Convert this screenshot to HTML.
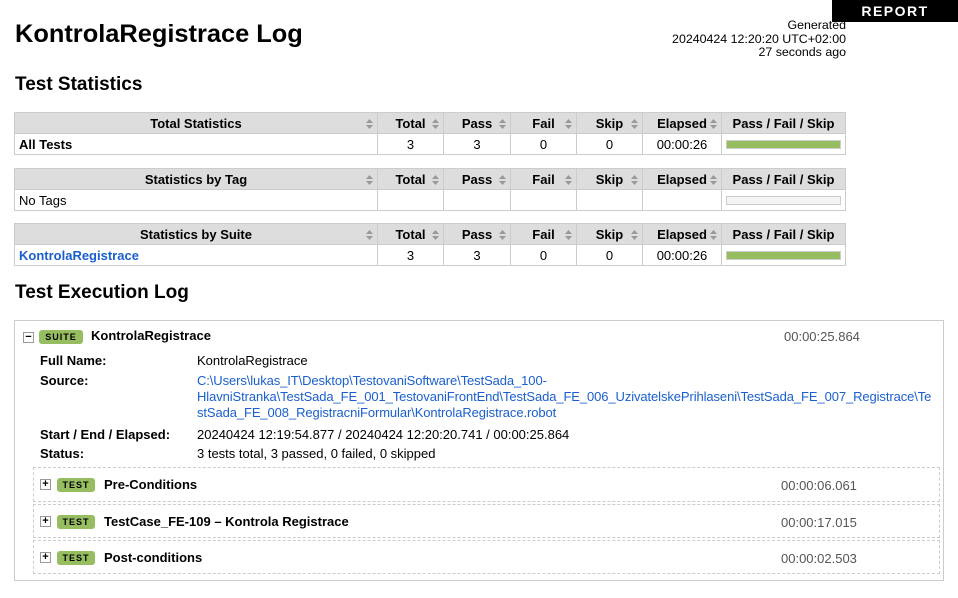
<!DOCTYPE html>
<html><head><meta charset="utf-8"><style>
*{margin:0;padding:0;box-sizing:border-box}
body{width:958px;height:598px;background:#fff;font-family:"Liberation Sans",Arial,sans-serif;color:#000;position:relative;overflow:hidden;font-size:13px}
.a{position:absolute}
#rep{left:832px;top:0;width:126px;height:22px;background:#000;color:#fff;font-weight:bold;font-size:14px;letter-spacing:1.5px;text-align:center;line-height:22px}
#gen{right:112px;top:19px;text-align:right;font-size:12.4px;line-height:13.5px}
h1{position:absolute;left:15px;top:20px;font-size:25.4px;font-weight:bold}
h2{position:absolute;left:15px;font-size:19px;font-weight:bold}
table{position:absolute;left:14px;width:831px;border-collapse:collapse;table-layout:fixed}
td,th{border:1px solid #ccc;height:21px;font-size:13px;padding:0 4px;white-space:nowrap}
th{background:#ddd;font-weight:bold;text-align:center;position:relative}
td{text-align:center}
td.n{text-align:left}
th .s{position:absolute;right:4px;top:6px}
.bar{height:9px;background:#97bd61;border:1px solid #ccc}
.bar.e{background:#f4f4f4}
#suite{left:14px;top:320px;width:930px;height:261px;border:1px solid #ccc}
.badge{position:absolute;background:#97bd61;border-radius:3px;font-size:9px;font-weight:bold;letter-spacing:1px;text-align:center;line-height:14px;height:14px}
.tog{position:absolute;width:11px;height:11px;border:1px solid #999;font-size:11px;line-height:9px;text-align:center;font-weight:bold}
.lbl{position:absolute;left:40px;font-weight:bold}
.val{position:absolute;left:197px;white-space:nowrap}
.tb{position:absolute;left:33px;width:907px;border:1px dashed #ccc}
.el{position:absolute;color:#555}
a{color:#1a5fcf;text-decoration:none}
</style></head><body>
<div id="rep" class="a">REPORT</div>
<div id="gen" class="a">Generated<br>20240424 12:20:20 UTC+02:00<br>27 seconds ago</div>
<h1>KontrolaRegistrace Log</h1>
<h2 style="top:74px">Test Statistics</h2>

<table style="top:112px"><colgroup><col style="width:363px"><col style="width:66px"><col style="width:67px"><col style="width:66px"><col style="width:66px"><col style="width:79px"><col style="width:124px"></colgroup>
<tr><th>Total Statistics<svg class="s" width="7" height="10"><path d="M0 4L3.5 0L7 4Z M0 6L3.5 10L7 6Z" fill="#999"/></svg></th><th>Total<svg class="s" width="7" height="10"><path d="M0 4L3.5 0L7 4Z M0 6L3.5 10L7 6Z" fill="#999"/></svg></th><th>Pass<svg class="s" width="7" height="10"><path d="M0 4L3.5 0L7 4Z M0 6L3.5 10L7 6Z" fill="#999"/></svg></th><th>Fail<svg class="s" width="7" height="10"><path d="M0 4L3.5 0L7 4Z M0 6L3.5 10L7 6Z" fill="#999"/></svg></th><th>Skip<svg class="s" width="7" height="10"><path d="M0 4L3.5 0L7 4Z M0 6L3.5 10L7 6Z" fill="#999"/></svg></th><th>Elapsed<svg class="s" width="7" height="10"><path d="M0 4L3.5 0L7 4Z M0 6L3.5 10L7 6Z" fill="#999"/></svg></th><th>Pass / Fail / Skip</th></tr>
<tr><td class="n"><b>All Tests</b></td><td>3</td><td>3</td><td>0</td><td>0</td><td>00:00:26</td><td><div class="bar"></div></td></tr></table>

<table style="top:168px"><colgroup><col style="width:363px"><col style="width:66px"><col style="width:67px"><col style="width:66px"><col style="width:66px"><col style="width:79px"><col style="width:124px"></colgroup>
<tr><th>Statistics by Tag<svg class="s" width="7" height="10"><path d="M0 4L3.5 0L7 4Z M0 6L3.5 10L7 6Z" fill="#999"/></svg></th><th>Total<svg class="s" width="7" height="10"><path d="M0 4L3.5 0L7 4Z M0 6L3.5 10L7 6Z" fill="#999"/></svg></th><th>Pass<svg class="s" width="7" height="10"><path d="M0 4L3.5 0L7 4Z M0 6L3.5 10L7 6Z" fill="#999"/></svg></th><th>Fail<svg class="s" width="7" height="10"><path d="M0 4L3.5 0L7 4Z M0 6L3.5 10L7 6Z" fill="#999"/></svg></th><th>Skip<svg class="s" width="7" height="10"><path d="M0 4L3.5 0L7 4Z M0 6L3.5 10L7 6Z" fill="#999"/></svg></th><th>Elapsed<svg class="s" width="7" height="10"><path d="M0 4L3.5 0L7 4Z M0 6L3.5 10L7 6Z" fill="#999"/></svg></th><th>Pass / Fail / Skip</th></tr>
<tr><td class="n">No Tags</td><td></td><td></td><td></td><td></td><td></td><td><div class="bar e"></div></td></tr></table>

<table style="top:223px"><colgroup><col style="width:363px"><col style="width:66px"><col style="width:67px"><col style="width:66px"><col style="width:66px"><col style="width:79px"><col style="width:124px"></colgroup>
<tr><th>Statistics by Suite<svg class="s" width="7" height="10"><path d="M0 4L3.5 0L7 4Z M0 6L3.5 10L7 6Z" fill="#999"/></svg></th><th>Total<svg class="s" width="7" height="10"><path d="M0 4L3.5 0L7 4Z M0 6L3.5 10L7 6Z" fill="#999"/></svg></th><th>Pass<svg class="s" width="7" height="10"><path d="M0 4L3.5 0L7 4Z M0 6L3.5 10L7 6Z" fill="#999"/></svg></th><th>Fail<svg class="s" width="7" height="10"><path d="M0 4L3.5 0L7 4Z M0 6L3.5 10L7 6Z" fill="#999"/></svg></th><th>Skip<svg class="s" width="7" height="10"><path d="M0 4L3.5 0L7 4Z M0 6L3.5 10L7 6Z" fill="#999"/></svg></th><th>Elapsed<svg class="s" width="7" height="10"><path d="M0 4L3.5 0L7 4Z M0 6L3.5 10L7 6Z" fill="#999"/></svg></th><th>Pass / Fail / Skip</th></tr>
<tr><td class="n"><a><b>KontrolaRegistrace</b></a></td><td>3</td><td>3</td><td>0</td><td>0</td><td>00:00:26</td><td><div class="bar"></div></td></tr></table>

<h2 style="top:282px">Test Execution Log</h2>
<div id="suite" class="a"></div>
<div class="tog" style="left:23px;top:332px">−</div>
<div class="badge" style="left:39px;top:330px;width:44px">SUITE</div>
<div class="a" style="left:91px;top:328px;font-weight:bold;font-size:13px">KontrolaRegistrace</div>
<div class="el" style="left:784px;top:329px">00:00:25.864</div>

<div class="lbl" style="top:353px">Full Name:</div><div class="val" style="top:353px">KontrolaRegistrace</div>
<div class="lbl" style="top:373px">Source:</div>
<div class="val" style="top:373px;line-height:16px;letter-spacing:-0.1px"><a>C:\Users\lukas_IT\Desktop\TestovaniSoftware\TestSada_100-<br>HlavniStranka\TestSada_FE_001_TestovaniFrontEnd\TestSada_FE_006_UzivatelskePrihlaseni\TestSada_FE_007_Registrace\Te<br>stSada_FE_008_RegistracniFormular\KontrolaRegistrace.robot</a></div>
<div class="lbl" style="top:427px">Start / End / Elapsed:</div><div class="val" style="top:427px">20240424 12:19:54.877 / 20240424 12:20:20.741 / 00:00:25.864</div>
<div class="lbl" style="top:446px">Status:</div><div class="val" style="top:446px">3 tests total, 3 passed, 0 failed, 0 skipped</div>

<div class="tb" style="top:467px;height:35px"></div>
<div class="tog" style="left:40px;top:479px">+</div>
<div class="badge" style="left:57px;top:478px;width:38px">TEST</div>
<div class="a" style="left:104px;top:477px;font-weight:bold">Pre-Conditions</div>
<div class="el" style="left:781px;top:478px">00:00:06.061</div>

<div class="tb" style="top:504px;height:34px"></div>
<div class="tog" style="left:40px;top:516px">+</div>
<div class="badge" style="left:57px;top:515px;width:38px">TEST</div>
<div class="a" style="left:104px;top:514px;font-weight:bold">TestCase_FE-109 – Kontrola Registrace</div>
<div class="el" style="left:781px;top:515px">00:00:17.015</div>

<div class="tb" style="top:540px;height:34px"></div>
<div class="tog" style="left:40px;top:552px">+</div>
<div class="badge" style="left:57px;top:551px;width:38px">TEST</div>
<div class="a" style="left:104px;top:550px;font-weight:bold">Post-conditions</div>
<div class="el" style="left:781px;top:551px">00:00:02.503</div>
</body></html>
